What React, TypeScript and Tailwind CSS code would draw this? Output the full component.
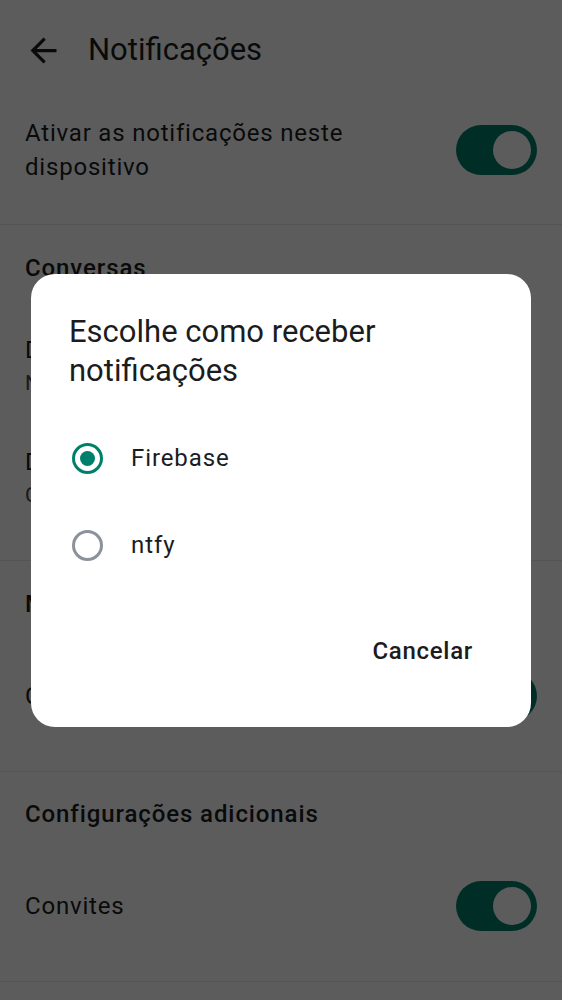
import React from "react";

function Switch() {
  return (
    <div className="flex h-[50px] w-[81px] shrink-0 items-center justify-end rounded-full bg-[#00806a] pr-[6px]">
      <div className="h-[38px] w-[38px] rounded-full bg-white" />
    </div>
  );
}

function Radio({ checked }: { checked: boolean }) {
  return checked ? (
    <div className="flex h-[31px] w-[31px] shrink-0 items-center justify-center rounded-full border-[3px] border-[#00806a]">
      <div className="h-[15px] w-[15px] rounded-full bg-[#00806a]" />
    </div>
  ) : (
    <div className="h-[31px] w-[31px] shrink-0 rounded-full border-[3px] border-[#8c929b]" />
  );
}

export default function App() {
  return (
    <div
      className="relative h-[1000px] w-[562px] overflow-hidden bg-white text-[#1b1c1e]"
      style={{ fontFamily: "Roboto, 'Noto Sans', sans-serif" }}
    >
      {/* Top bar */}
      <div className="flex h-[100px] items-center pl-[24px]">
        <svg width="39" height="39" viewBox="0 0 24 24" className="shrink-0">
          <path d="M20 11H7.83l5.59-5.59L12 4l-8 8 8 8 1.41-1.41L7.83 13H20v-2z" fill="#1b1c1e" />
        </svg>
        <h1 className="ml-[25px] text-[31px] leading-[40px]">Notificações</h1>
      </div>

      {/* Enable row */}
      <div className="flex h-[125px] items-center justify-between border-b border-[#e8e8e8] px-[25px] pb-[24px]">
        <div className="w-[360px] text-[24px] leading-[34px] tracking-[0.8px]">
          Ativar as notificações neste dispositivo
        </div>
        <Switch />
      </div>

      {/* Conversas */}
      <div className="border-b border-[#e8e8e8] px-[25px] pb-[49px]">
        <div className="pt-[26px] text-[24px] font-medium leading-[34px] tracking-[0.9px]">Conversas</div>
        <div className="pt-[48px]">
          <div className="text-[24px] leading-[34px] tracking-[0.8px]">De grupo</div>
          <div className="text-[21px] leading-[32px] tracking-[0.4px] text-[#44474e]">Notificar para todas as mensagens</div>
        </div>
        <div className="pt-[46px]">
          <div className="text-[24px] leading-[34px] tracking-[0.8px]">Diretas</div>
          <div className="text-[21px] leading-[32px] tracking-[0.4px] text-[#44474e]">Com todas as mensagens</div>
        </div>
      </div>

      {/* Menções */}
      <div className="border-b border-[#e8e8e8] px-[25px]">
        <div className="pt-[26px] text-[24px] font-medium leading-[34px] tracking-[0.9px]">Menções</div>
        <div className="flex h-[150px] items-center justify-between">
          <div className="text-[24px] leading-[34px] tracking-[0.8px]">Chamadas</div>
          <Switch />
        </div>
      </div>

      {/* Configurações adicionais */}
      <div className="border-b border-[#e8e8e8] px-[25px]">
        <div className="pt-[25px] text-[24px] font-medium leading-[34px] tracking-[0.9px]">Configurações adicionais</div>
        <div className="flex h-[150px] items-center justify-between">
          <div className="text-[24px] leading-[34px] tracking-[0.8px]">Convites</div>
          <Switch />
        </div>
      </div>

      {/* Scrim + dialog */}
      <div className="absolute inset-0 flex items-center justify-center bg-black/64">
        <div className="w-[500px] rounded-[24px] bg-white text-[#1b1c1e]">
          <div className="px-[38px] pt-[38px] text-[31px] leading-[39px]">
            Escolhe como receber notificações
          </div>
          <div className="pt-[25px]">
            <div className="flex h-[87px] items-center pl-[41px]">
              <Radio checked />
              <span className="ml-[28px] text-[24px] tracking-[0.9px]">Firebase</span>
            </div>
            <div className="flex h-[87px] items-center pl-[41px]">
              <Radio checked={false} />
              <span className="ml-[28px] text-[24px] tracking-[0.9px]">ntfy</span>
            </div>
          </div>
          <div className="mt-[34px] flex justify-end pb-[48px] pr-[42px]">
            <button className="flex h-[56px] items-center px-[16px] text-[24px] font-medium tracking-[0.7px] text-[#1b1c1e]">
              Cancelar
            </button>
          </div>
        </div>
      </div>
    </div>
  );
}
